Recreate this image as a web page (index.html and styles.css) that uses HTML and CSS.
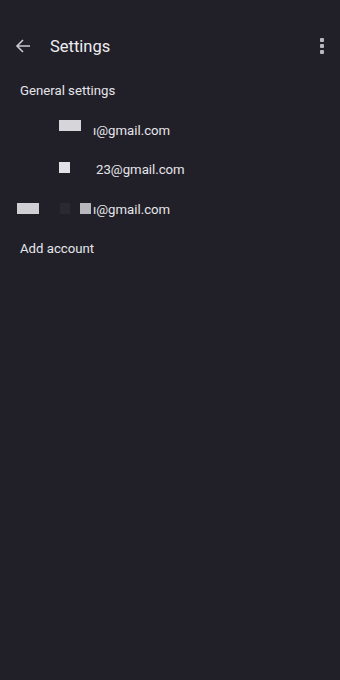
FILE: index.html
```html
<!DOCTYPE html>
<html>
<head>
<meta charset="utf-8">
<link rel="stylesheet" href="styles.css">
</head>
<body>
<div class="app">
  <header class="bar">
    <svg class="back" width="16" height="16" viewBox="0 0 16 16"><path d="M15 8H2M8 2L2 8l6 6" fill="none" stroke="#c8c7cc" stroke-width="1.6"/></svg>
    <h1 class="title">Settings</h1>
    <div class="menu"><span></span><span></span><span></span></div>
  </header>
  <ul class="list">
    <li class="item">General settings</li>
    <li class="item acct"><span class="blk b1"></span><span class="mail m1">ı@gmail.com</span></li>
    <li class="item acct"><span class="blk b2"></span><span class="mail m2">23@gmail.com</span></li>
    <li class="item acct"><span class="blk b3"></span><span class="blk b4"></span><span class="blk b5"></span><span class="mail m3">ı@gmail.com</span></li>
    <li class="item">Add account</li>
  </ul>
</div>
</body>
</html>
```
FILE: styles.css
```css
html, body { margin: 0; padding: 0; }
body {
  background: #212029;
  font-family: Roboto, "Noto Sans", sans-serif;
  color: #e6e5ea;
  width: 340px;
  height: 680px;
}
.app { display: flex; flex-direction: column; }
.bar {
  display: flex;
  align-items: center;
  height: 40px;
  margin-top: 26px;
  padding-left: 15px;
  padding-right: 16px;
}
.back { flex: none; }
.title {
  margin: 0 0 0 19px;
  font-size: 16.5px;
  font-weight: 400;
  flex: 1;
  color: #eeedf1;
}
.menu { display: flex; flex-direction: column; gap: 2px; }
.menu span { width: 4px; height: 4px; background: #b9b8be; border-radius: 1px; }
.list { list-style: none; margin: 5px 0 0; padding: 0; }
.item {
  height: 39.5px;
  display: flex;
  align-items: center;
  padding-left: 20px;
  font-size: 13.2px;
}
.acct { position: relative; }
.blk { position: absolute; display: block; }
.b1 { left: 59px; top: 9.5px; width: 22px; height: 11px; background: #d6d6da; }
.b2 { left: 59px; top: 12px; width: 11px; height: 11px; background: #e2e2e6; }
.b3 { left: 17px; top: 13.5px; width: 22px; height: 11px; background: #cfcfd4; }
.b4 { left: 60px; top: 13.5px; width: 10px; height: 11px; background: #2a2930; }
.b5 { left: 80px; top: 13.5px; width: 11px; height: 11px; background: #b8b8bd; }
.mail { position: absolute; }
.m1 { left: 93px; }
.m2 { left: 96px; }
.m3 { left: 93px; }
```
